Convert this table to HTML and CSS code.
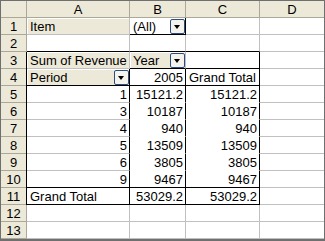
FILE: index.html
```html
<!DOCTYPE html>
<html lang="en">
<head>
    <meta charset="UTF-8">
    <meta name="viewport" content="width=device-width, initial-scale=1.0">
    <title>Pivot Table</title>
    <link rel="stylesheet" href="styles.css">
</head>
<body>
    <div class="sheet">
        <!-- column headers -->
        <div class="hd corner"></div>
        <div class="hd">A</div>
        <div class="hd">B</div>
        <div class="hd">C</div>
        <div class="hd last">D</div>

        <!-- row 1 -->
        <div class="hd rn">1</div>
        <div class="c field">Item</div>
        <div class="c page bb br"><span>(All)</span><span class="drop"></span></div>
        <div class="c"></div>
        <div class="c last"></div>

        <!-- row 2 -->
        <div class="hd rn">2</div>
        <div class="c bb"></div>
        <div class="c bb"></div>
        <div class="c bb"></div>
        <div class="c last"></div>

        <!-- row 3 -->
        <div class="hd rn">3</div>
        <div class="c field bl">Sum of Revenue</div>
        <div class="c field split bb"><span>Year</span><span class="drop"></span></div>
        <div class="c bb br"></div>
        <div class="c last"></div>

        <!-- row 4 -->
        <div class="hd rn">4</div>
        <div class="c field split bl bb br"><span>Period</span><span class="drop"></span></div>
        <div class="c num bb br">2005</div>
        <div class="c bb br">Grand Total</div>
        <div class="c last"></div>

        <!-- rows 5-10 -->
        <div class="hd rn">5</div>
        <div class="c num bl br">1</div>
        <div class="c num br nob">15121.2</div>
        <div class="c num br nob">15121.2</div>
        <div class="c last"></div>

        <div class="hd rn">6</div>
        <div class="c num bl br">3</div>
        <div class="c num br nob">10187</div>
        <div class="c num br nob">10187</div>
        <div class="c last"></div>

        <div class="hd rn">7</div>
        <div class="c num bl br">4</div>
        <div class="c num br nob">940</div>
        <div class="c num br nob">940</div>
        <div class="c last"></div>

        <div class="hd rn">8</div>
        <div class="c num bl br">5</div>
        <div class="c num br nob">13509</div>
        <div class="c num br nob">13509</div>
        <div class="c last"></div>

        <div class="hd rn">9</div>
        <div class="c num bl br">6</div>
        <div class="c num br nob">3805</div>
        <div class="c num br nob">3805</div>
        <div class="c last"></div>

        <div class="hd rn">10</div>
        <div class="c num bl br bb">9</div>
        <div class="c num br bb">9467</div>
        <div class="c num br bb">9467</div>
        <div class="c last"></div>

        <!-- row 11 -->
        <div class="hd rn">11</div>
        <div class="c bl br bb">Grand Total</div>
        <div class="c num br bb">53029.2</div>
        <div class="c num br bb">53029.2</div>
        <div class="c last"></div>

        <!-- rows 12-13 -->
        <div class="hd rn">12</div>
        <div class="c"></div>
        <div class="c"></div>
        <div class="c"></div>
        <div class="c last"></div>

        <div class="hd rn">13</div>
        <div class="c"></div>
        <div class="c"></div>
        <div class="c"></div>
        <div class="c last"></div>
    </div>
</body>
</html>
```

FILE: styles.css
```css
body {
    margin: 0;
    background-color: #ffffff;
}
.sheet {
    display: grid;
    grid-template-columns: 26px 103px 56px 74px 64px;
    grid-auto-rows: 17px;
    width: 323px;
    border: 1px solid #6f6f6f;
    border-bottom-width: 2px;
    font-family: "Liberation Sans", Arial, sans-serif;
    font-size: 13px;
    line-height: 17px;
    color: #000000;
}
.hd {
    box-sizing: border-box;
    background-color: #ece9d8;
    border-right: 1px solid #aca899;
    border-bottom: 1px solid #aca899;
    text-align: center;
}
.hd.last {
    border-right: none;
}
.c {
    box-sizing: border-box;
    border-right: 1px solid #c0c0c0;
    border-bottom: 1px solid #c0c0c0;
    padding: 0 2px 0 3px;
    white-space: nowrap;
    overflow: hidden;
}
.c.last {
    border-right: none;
}
.num {
    text-align: right;
}
.field {
    background-color: #ece9d8;
    box-shadow: inset 1px 1px #ffffff;
}
.split, .page {
    display: flex;
    justify-content: space-between;
    align-items: center;
    padding-right: 0;
}
.drop {
    box-sizing: border-box;
    width: 15px;
    height: 15px;
    border: 1px solid #2c4e7e;
    border-radius: 2px;
    background-color: #f4f3ee;
    position: relative;
    flex: none;
}
.drop::after {
    content: "";
    position: absolute;
    left: 3px;
    top: 5px;
    border-left: 3.5px solid transparent;
    border-right: 3.5px solid transparent;
    border-top: 4px solid #000000;
}
.bb {
    border-bottom-color: #000000;
}
.br {
    border-right-color: #000000;
}
.bl {
    box-shadow: -1px 0 #000000;
}
.field.bl {
    box-shadow: -1px 0 #000000, inset 1px 1px #ffffff;
}
.nob {
    border-bottom-color: #ffffff;
}
```
